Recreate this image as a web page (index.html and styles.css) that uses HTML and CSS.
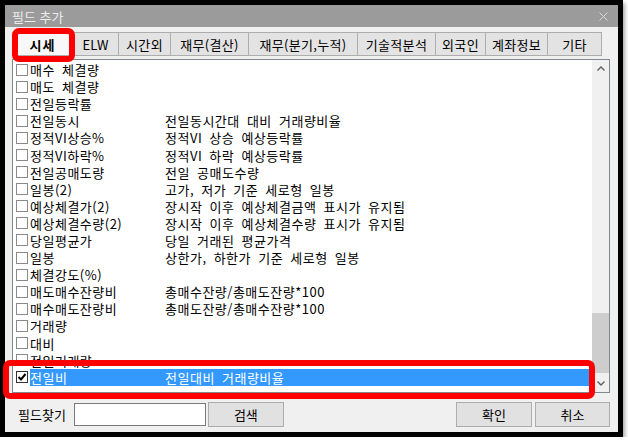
FILE: index.html
```html
<!DOCTYPE html>
<html lang="ko">
<head>
    <meta charset="UTF-8">
    <title>필드 추가</title>
    <link rel="stylesheet" href="styles.css">
</head>
<body>
<div class="window">
    <div class="titlebar">
        <span>필드 추가</span>
        <svg class="close" width="9" height="9" viewBox="0 0 9 9"><path d="M0.5 0.5L8.5 8.5M8.5 0.5L0.5 8.5" stroke="#d8d8d8" stroke-width="1"/></svg>
    </div>
    <div class="body">
        <div class="tabs">
            <div class="tab active">시세</div>
            <div class="tab">ELW</div>
            <div class="tab">시간외</div>
            <div class="tab">재무(결산)</div>
            <div class="tab">재무(분기,누적)</div>
            <div class="tab">기술적분석</div>
            <div class="tab">외국인</div>
            <div class="tab">계좌정보</div>
            <div class="tab">기타</div>
        </div>
        <div class="list">
            <div class="rows">
                <div class="row"><span class="check"></span><span class="label"><span class="name">매수 체결량</span></span></div>
                <div class="row"><span class="check"></span><span class="label"><span class="name">매도 체결량</span></span></div>
                <div class="row"><span class="check"></span><span class="label"><span class="name">전일등락률</span></span></div>
                <div class="row"><span class="check"></span><span class="label"><span class="name">전일동시</span><span>전일동시간대 대비 거래량비율</span></span></div>
                <div class="row"><span class="check"></span><span class="label"><span class="name">정적VI상승%</span><span>정적VI 상승 예상등락률</span></span></div>
                <div class="row"><span class="check"></span><span class="label"><span class="name">정적VI하락%</span><span>정적VI 하락 예상등락률</span></span></div>
                <div class="row"><span class="check"></span><span class="label"><span class="name">전일공매도량</span><span>전일 공매도수량</span></span></div>
                <div class="row"><span class="check"></span><span class="label"><span class="name">일봉(2)</span><span>고가, 저가 기준 세로형 일봉</span></span></div>
                <div class="row"><span class="check"></span><span class="label"><span class="name">예상체결가(2)</span><span>장시작 이후 예상체결금액 표시가 유지됨</span></span></div>
                <div class="row"><span class="check"></span><span class="label"><span class="name">예상체결수량(2)</span><span>장시작 이후 예상체결수량 표시가 유지됨</span></span></div>
                <div class="row"><span class="check"></span><span class="label"><span class="name">당일평균가</span><span>당일 거래된 평균가격</span></span></div>
                <div class="row"><span class="check"></span><span class="label"><span class="name">일봉</span><span>상한가, 하한가 기준 세로형 일봉</span></span></div>
                <div class="row"><span class="check"></span><span class="label"><span class="name">체결강도(%)</span></span></div>
                <div class="row"><span class="check"></span><span class="label"><span class="name">매도매수잔량비</span><span>총매수잔량/총매도잔량*100</span></span></div>
                <div class="row"><span class="check"></span><span class="label"><span class="name">매수매도잔량비</span><span>총매도잔량/총매수잔량*100</span></span></div>
                <div class="row"><span class="check"></span><span class="label"><span class="name">거래량</span></span></div>
                <div class="row"><span class="check"></span><span class="label"><span class="name">대비</span></span></div>
                <div class="row"><span class="check"></span><span class="label"><span class="name">전일거래량</span></span></div>
                <div class="row selected"><span class="check checked"><svg width="10" height="10" viewBox="0 0 10 10"><path d="M1.5 5L4 7.5L8.5 2" fill="none" stroke="#000" stroke-width="2"/></svg></span><span class="label"><span class="name">전일비</span><span>전일대비 거래량비율</span></span></div>
            </div>
            <div class="scrollbar">
                <div class="arrow"><svg width="8" height="5" viewBox="0 0 8 5"><path d="M0.5 4.5L4 1L7.5 4.5" fill="none" stroke="#606060" stroke-width="1.4"/></svg></div>
                <div class="track"><div class="thumb"></div></div>
                <div class="arrow"><svg width="8" height="5" viewBox="0 0 8 5"><path d="M0.5 0.5L4 4L7.5 0.5" fill="none" stroke="#606060" stroke-width="1.4"/></svg></div>
            </div>
        </div>
        <div class="bottom">
            <span class="find-label">필드찾기</span>
            <input class="find-input" type="text">
            <button class="btn">검색</button>
            <span class="spacer"></span>
            <button class="btn">확인</button>
            <button class="btn cancel">취소</button>
        </div>
    </div>
</div>
<div class="mark mark-tab"></div>
<div class="mark mark-row"></div>
</body>
</html>
```

FILE: styles.css
```css
body {
    margin: 0;
    background: #fff;
    font-family: "Noto Sans CJK KR", "Noto Sans", sans-serif;
    font-size: 13px;
    line-height: 17px;
    color: #000;
}
.window {
    width: 613px;
    height: 427px;
    border: 5px solid #000;
    background: #f0f0f0;
    box-shadow: 2px 3px 4px rgba(0, 0, 0, 0.35);
}
.titlebar {
    height: 22px;
    background: #9b9b9b;
    color: #ececec;
    display: flex;
    align-items: center;
    justify-content: space-between;
    padding: 0 10px 0 7px;
}
.body {
    padding: 5px 8px 0 7px;
}
.tabs {
    display: flex;
    height: 24px;
}
.tab {
    box-sizing: border-box;
    display: flex;
    align-items: center;
    justify-content: center;
    background: #e3e3e3;
    border: 1px solid #adadad;
    border-right: none;
    letter-spacing: 0.3px;
}
.tab:last-child {
    border-right: 1px solid #adadad;
}
.tab.active {
    background: #f8f8f8;
    font-weight: bold;
    letter-spacing: 1px;
}
.tab:nth-child(1) { width: 60px; }
.tab:nth-child(2) { width: 46px; }
.tab:nth-child(3) { width: 52px; }
.tab:nth-child(4) { width: 78px; }
.tab:nth-child(5) { width: 109px; }
.tab:nth-child(6) { width: 78px; }
.tab:nth-child(7) { width: 50px; }
.tab:nth-child(8) { width: 62px; }
.tab:nth-child(9) { width: 55px; }

.list {
    margin-top: 3px;
    height: 332px;
    border: 1px solid #828790;
    background: #fff;
    display: flex;
}
.rows {
    flex: 1;
    padding-top: 1px;
    overflow: hidden;
}
.row {
    display: flex;
    align-items: center;
    height: 17.1px;
    line-height: 17px;
    white-space: nowrap;
    letter-spacing: 0.5px;
    word-spacing: 3px;
}
.check {
    box-sizing: border-box;
    width: 12px;
    height: 12px;
    margin: 0 2px 0 3px;
    border: 1px solid #8a8a8a;
    background: #fff;
    display: flex;
    align-items: center;
    justify-content: center;
}
.check.checked {
    border-color: #333;
}
.label {
    flex: 1;
    display: flex;
    align-items: center;
    height: 100%;
}
.name {
    width: 135px;
}
.row.selected .label {
    background: #3399ff;
    color: #fff;
}
.scrollbar {
    width: 17px;
    background: #f0f0f0;
    display: flex;
    flex-direction: column;
}
.arrow {
    height: 17px;
    display: flex;
    align-items: center;
    justify-content: center;
}
.track {
    flex: 1;
    display: flex;
    flex-direction: column;
    justify-content: flex-end;
    padding-bottom: 2px;
}
.thumb {
    height: 60px;
    background: #cdcdcd;
}

.bottom {
    display: flex;
    align-items: center;
    margin-top: 9px;
    height: 25px;
}
.find-label {
    margin: 0 8px 0 6px;
}
.find-input {
    box-sizing: border-box;
    width: 132px;
    height: 23px;
    border: 1px solid #7a7a7a;
    background: #fff;
    margin: 0;
}
.btn {
    box-sizing: border-box;
    width: 76px;
    height: 25px;
    margin-left: 2px;
    background: #e1e1e1;
    border: 1px solid #adadad;
    font-family: inherit;
    font-size: 13px;
    line-height: 17px;
    color: #000;
    padding: 0;
}
.btn.cancel {
    width: 75px;
    margin-left: 3px;
}
.spacer {
    flex: 1;
}
.mark {
    position: absolute;
    box-sizing: border-box;
    border: 6px solid #ff0000;
    border-radius: 7px;
}
.mark-tab {
    left: 12px;
    top: 28px;
    width: 63px;
    height: 34px;
}
.mark-row {
    left: 3px;
    top: 360px;
    width: 592px;
    height: 39px;
}
```
